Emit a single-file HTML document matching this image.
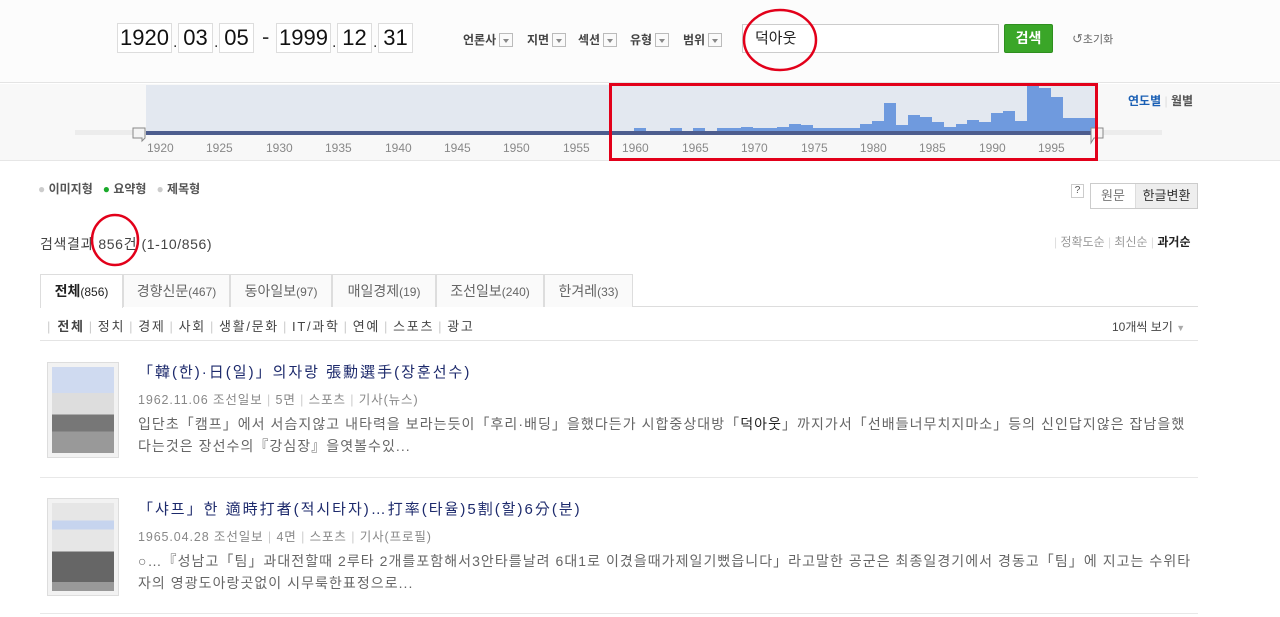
<!DOCTYPE html>
<html><head><meta charset="utf-8">
<style>
*{margin:0;padding:0;box-sizing:border-box}
body{width:1280px;height:617px;overflow:hidden;background:#fff;font-family:"Liberation Sans","Noto Sans CJK KR",sans-serif;position:relative;color:#333}
.a{position:absolute;white-space:nowrap}
.db{position:absolute;top:23px;height:30px;border:1px solid #ddd;background:#fff;font-size:22px;line-height:28px;text-align:center;color:#111}
.dot{position:absolute;top:44px;font-size:16px;color:#333}
.fl{position:absolute;top:31px;font-size:12px;font-weight:bold;color:#444}
.dd{display:inline-block;width:14px;height:14px;border:1px solid #bbb;vertical-align:-3px;margin-left:3px;background:#fafafa;position:relative}
.dd:after{content:"";position:absolute;left:3px;top:5px;border:3px solid transparent;border-top:4px solid #888}
.tab{position:absolute;top:274px;height:33px;border:1px solid #ddd;border-bottom:none;background:#fafafa;font-size:14px;color:#666;text-align:center;line-height:33px}
.tab small{font-size:12px}
.cat{position:absolute;top:316px;font-size:13px;color:#444;letter-spacing:1.7px}
.sep{color:#ccc;margin:0 4px}
.thumb{position:absolute;left:47px;width:72px;border:1px solid #ddd;background:#f2f2f2;padding:4px}
.tt{position:absolute;left:138px;font-size:15px;color:#1d2a6c;letter-spacing:2px}
.meta{position:absolute;left:138px;font-size:12.5px;color:#888;letter-spacing:0.9px}
.sn{position:absolute;left:138px;font-size:14px;color:#666;line-height:22px;letter-spacing:1.05px}
</style></head><body>
<div class="a" style="left:0;top:0;width:1280px;height:83px;background:#fcfcfc;border-bottom:1px solid #e4e4e4"></div>
<div class="db" style="left:117px;width:55px">1920</div><span class="dot" style="left:173px;top:34px">.</span>
<div class="db" style="left:178px;width:35px">03</div><span class="dot" style="left:214px;top:34px">.</span>
<div class="db" style="left:219px;width:35px">05</div>
<div class="a" style="left:262px;top:24px;font-size:22px">-</div>
<div class="db" style="left:276px;width:55px">1999</div><span class="dot" style="left:332px;top:34px">.</span>
<div class="db" style="left:337px;width:35px">12</div><span class="dot" style="left:373px;top:34px">.</span>
<div class="db" style="left:378px;width:35px">31</div>
<div class="fl" style="left:463px">언론사<span class="dd"></span></div>
<div class="fl" style="left:527px">지면<span class="dd"></span></div>
<div class="fl" style="left:578px">섹션<span class="dd"></span></div>
<div class="fl" style="left:630px">유형<span class="dd"></span></div>
<div class="fl" style="left:683px">범위<span class="dd"></span></div>
<div class="a" style="left:742px;top:24px;width:257px;height:29px;border:1px solid #ccc;background:#fff;font-size:15px;line-height:27px;padding-left:12px;color:#222">덕아웃</div>
<div class="a" style="left:1004px;top:24px;width:49px;height:29px;background:#3aa628;border:1px solid #2f8f1f;border-radius:2px;color:#fff;font-weight:bold;font-size:14px;text-align:center;line-height:27px">검색</div>
<div class="a" style="left:1072px;top:31px;font-size:11px;color:#666"><span style="font-size:13px;color:#777">↺</span>초기화</div>

<svg class="a" style="left:0;top:0" width="1280" height="170">
<rect x="0" y="84" width="1280" height="77" fill="#f8f8f8"/>
<line x1="0" y1="160.5" x2="1280" y2="160.5" stroke="#e6e6e6"/>
<rect x="146" y="85" width="951" height="47" fill="#e3e8f0"/>
<rect x="75" y="130" width="71" height="5" fill="#ececec"/>
<rect x="1100" y="130" width="62" height="5" fill="#ececec"/>
<g fill="#6f9ade">
<rect x="634" y="128" width="12" height="4"/><rect x="670" y="128" width="12" height="4"/><rect x="693" y="128" width="12" height="4"/>
<rect x="717" y="128" width="24" height="4"/><rect x="741" y="127" width="12" height="5"/><rect x="753" y="128" width="24" height="4"/>
<rect x="777" y="127" width="12" height="5"/><rect x="789" y="124" width="12" height="8"/><rect x="801" y="125" width="12" height="7"/>
<rect x="813" y="128" width="48" height="4"/><rect x="860" y="124" width="12" height="8"/><rect x="872" y="121" width="12" height="11"/>
<rect x="884" y="103" width="12" height="29"/><rect x="896" y="125" width="12" height="7"/><rect x="908" y="115" width="12" height="17"/>
<rect x="920" y="117" width="12" height="15"/><rect x="932" y="122" width="12" height="10"/><rect x="944" y="127" width="12" height="5"/>
<rect x="956" y="124" width="12" height="8"/><rect x="967" y="120" width="12" height="12"/><rect x="979" y="122" width="12" height="10"/>
<rect x="991" y="113" width="12" height="19"/><rect x="1003" y="111" width="12" height="21"/><rect x="1015" y="121" width="12" height="11"/>
<rect x="1027" y="86" width="12" height="46"/><rect x="1039" y="88" width="12" height="44"/><rect x="1051" y="97" width="12" height="35"/>
<rect x="1063" y="118" width="34" height="14"/>
</g>
<rect x="146" y="131" width="951" height="4" fill="#4d5d8e"/>
<path d="M133 128h12v10l-3 3v-3h-9z" fill="#f4f4f4" stroke="#888"/>
<path d="M1091 128h12v10h-9l-3 5z" fill="#f4f4f4" stroke="#888"/>
<g font-size="12" fill="#888" font-family="Liberation Sans,sans-serif">
<text x="147" y="152">1920</text><text x="206" y="152">1925</text><text x="266" y="152">1930</text><text x="325" y="152">1935</text>
<text x="385" y="152">1940</text><text x="444" y="152">1945</text><text x="503" y="152">1950</text><text x="563" y="152">1955</text>
<text x="622" y="152">1960</text><text x="682" y="152">1965</text><text x="741" y="152">1970</text><text x="801" y="152">1975</text>
<text x="860" y="152">1980</text><text x="919" y="152">1985</text><text x="979" y="152">1990</text><text x="1038" y="152">1995</text>
</g>
<rect x="610.5" y="84.5" width="486" height="75" fill="none" stroke="#e2001a" stroke-width="3"/>
<ellipse cx="780" cy="40" rx="36" ry="30" fill="none" stroke="#e2001a" stroke-width="2.5"/>
</svg>
<div class="a" style="left:1128px;top:92px;font-size:12px;font-weight:bold;color:#1a5fb4">연도별 <span style="color:#ddd;font-weight:normal">|</span> <span style="color:#555">월별</span></div>

<div class="a" style="left:38px;top:180px;font-size:12px;font-weight:bold;color:#555"><span style="color:#ccc">●</span> 이미지형 &nbsp; <span style="color:#1aaa2a">●</span> 요약형 &nbsp; <span style="color:#ccc">●</span> 제목형</div>
<div class="a" style="left:1071px;top:184px;width:13px;height:14px;border:1px solid #ccc;font-size:10px;text-align:center;line-height:12px;color:#555">?</div>
<div class="a" style="left:1090px;top:183px;width:108px;height:26px;border:1px solid #ccc;font-size:13px;line-height:24px;color:#777"><span style="display:inline-block;width:44px;text-align:center">원문</span><span style="display:inline-block;width:62px;text-align:center;background:#eee;color:#333;border-left:1px solid #ddd">한글변환</span></div>
<div class="a" style="left:40px;top:234px;font-size:14px;color:#444;letter-spacing:0.6px">검색결과 856건 (1-10/856)</div>
<svg class="a" style="left:88px;top:212px" width="56" height="56"><ellipse cx="27" cy="28" rx="23" ry="25" fill="none" stroke="#e2001a" stroke-width="2.5"/></svg>
<div class="a" style="left:1054px;top:233px;font-size:12px;color:#999"><span style="color:#ddd">|</span> 정확도순 <span style="color:#ddd">|</span> 최신순 <span style="color:#ddd">|</span> <b style="color:#222">과거순</b></div>

<div class="a" style="left:40px;top:306px;width:1158px;height:1px;background:#ddd"></div>
<div class="tab" style="left:40px;width:83px;background:#fff;height:34px;color:#222;font-weight:bold">전체<small style="font-weight:normal">(856)</small></div>
<div class="tab" style="left:123px;width:107px">경향신문<small>(467)</small></div>
<div class="tab" style="left:230px;width:102px">동아일보<small>(97)</small></div>
<div class="tab" style="left:332px;width:104px">매일경제<small>(19)</small></div>
<div class="tab" style="left:436px;width:108px">조선일보<small>(240)</small></div>
<div class="tab" style="left:544px;width:89px">한겨레<small>(33)</small></div>
<div class="cat" style="left:47px"><span style="color:#ccc">|</span> <b>전체</b><span class="sep">|</span>정치<span class="sep">|</span>경제<span class="sep">|</span>사회<span class="sep">|</span>생활/문화<span class="sep">|</span>IT/과학<span class="sep">|</span>연예<span class="sep">|</span>스포츠<span class="sep">|</span>광고</div>
<div class="a" style="left:1112px;top:318px;font-size:12px;color:#444">10개씩 보기 <span style="color:#aaa;font-size:9px">▼</span></div>
<div class="a" style="left:40px;top:340px;width:1158px;height:1px;background:#e4e4e4"></div>

<div class="thumb" style="top:362px;height:96px"><div style="height:100%;background:linear-gradient(#cfdaf0 0 30%,#ddd 30% 55%,#777 55% 75%,#999 75%)"></div></div>
<div class="tt" style="top:361px">「韓(한)·日(일)」의자랑 張勳選手(장훈선수)</div>
<div class="meta" style="top:389px">1962.11.06 조선일보 <span style="color:#ccc">|</span> 5면 <span style="color:#ccc">|</span> 스포츠 <span style="color:#ccc">|</span> 기사(뉴스)</div>
<div class="sn" style="top:413px">입단초「캠프」에서 서슴지않고 내타력을 보라는듯이「후리·배딩」을했다든가 시합중상대방「<span style="color:#222">덕아웃</span>」까지가서「선배들너무치지마소」등의 신인답지않은 잡남을했<br>다는것은 장선수의『강심장』을엿볼수있...</div>
<div class="a" style="left:40px;top:477px;width:1158px;height:1px;background:#e8e8e8"></div>

<div class="thumb" style="top:498px;height:98px"><div style="height:100%;background:linear-gradient(#e6e6e6 0 20%,#c6d4ee 20% 30%,#e6e6e6 30% 55%,#666 55% 90%,#999 90%)"></div></div>
<div class="tt" style="top:498px">「샤프」한 適時打者(적시타자)…打率(타율)5割(할)6分(분)</div>
<div class="meta" style="top:526px">1965.04.28 조선일보 <span style="color:#ccc">|</span> 4면 <span style="color:#ccc">|</span> 스포츠 <span style="color:#ccc">|</span> 기사(프로필)</div>
<div class="sn" style="top:550px">○…『성남고「팀」과대전할때 2루타 2개를포함해서3안타를날려 6대1로 이겼을때가제일기뻤읍니다」라고말한 공군은 최종일경기에서 경동고「팀」에 지고는 수위타<br>자의 영광도아랑곳없이 시무룩한표정으로...</div>
<div class="a" style="left:40px;top:613px;width:1158px;height:1px;background:#e8e8e8"></div>
</body></html>
